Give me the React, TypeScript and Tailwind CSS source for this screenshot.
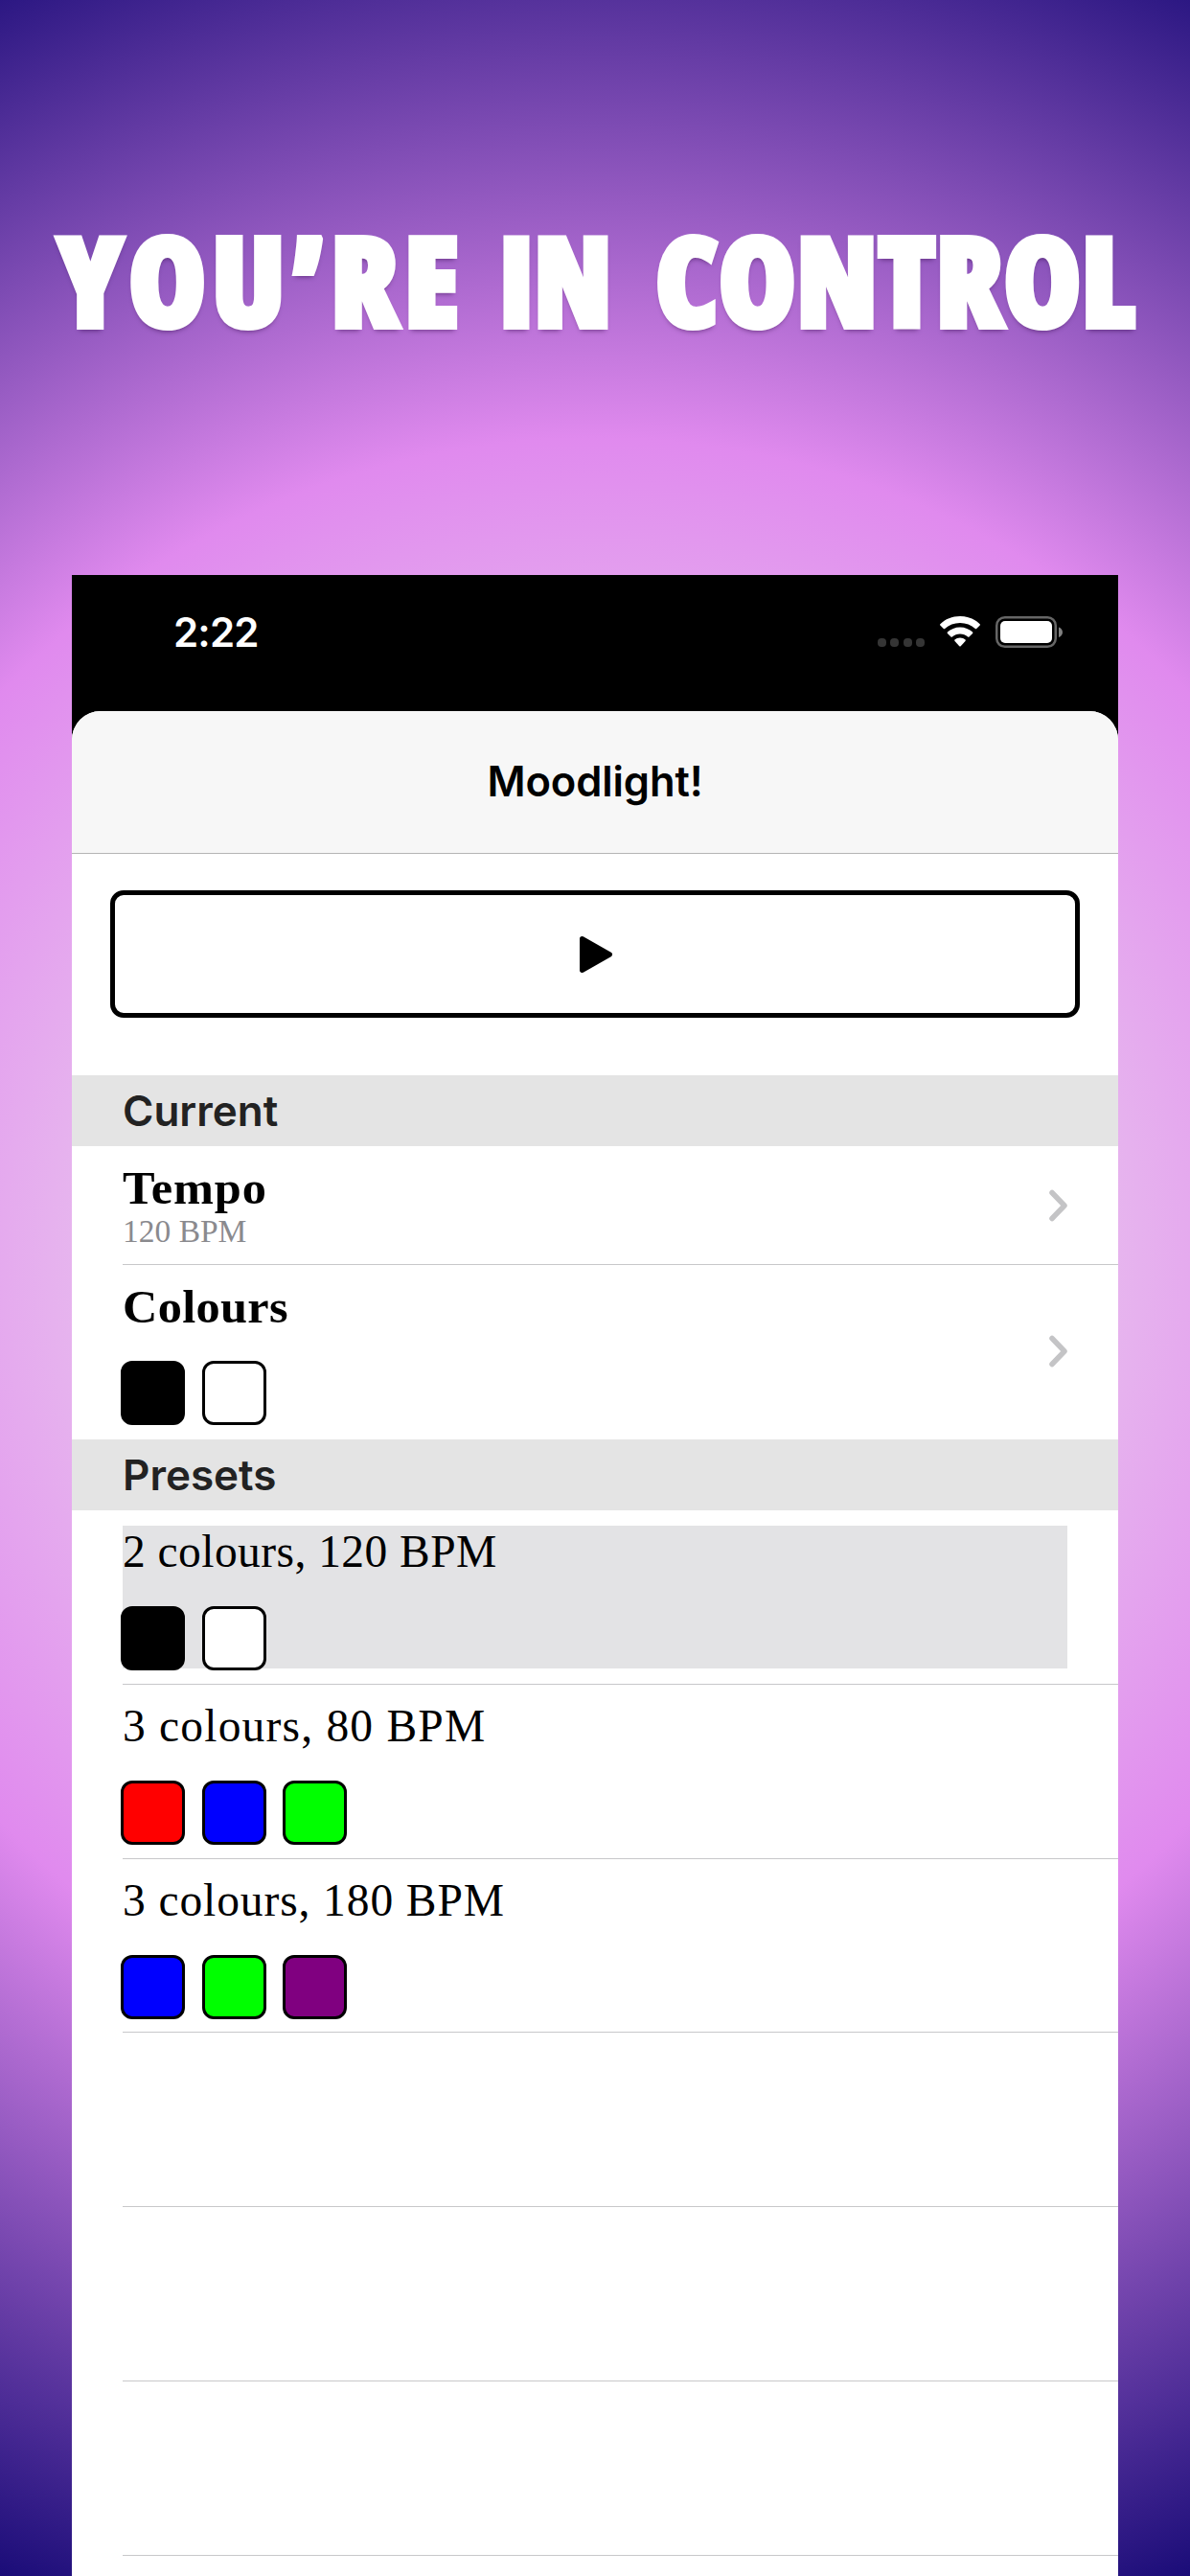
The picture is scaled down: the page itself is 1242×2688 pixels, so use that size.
import React from "react";

const sans = "font-['Inter',sans-serif] font-semibold leading-none whitespace-nowrap";
const serif = "font-['Liberation_Serif',serif] leading-none whitespace-nowrap";

function Swatches({ colors }: { colors: string[] }) {
  return (
    <div className="-ml-[2px] flex gap-[17.5px]">
      {colors.map((c) => (
        <span
          key={c}
          className="size-[67px] shrink-0 rounded-[12px] border-[3px] border-black"
          style={{ backgroundColor: c }}
        />
      ))}
    </div>
  );
}

function Chevron() {
  return (
    <svg width="20" height="34" viewBox="0 0 20 34" fill="none" className="shrink-0">
      <path d="M4 3.5 17 17 4 30.5" stroke="#c4c4c6" strokeWidth="5.500" strokeLinecap="round" strokeLinejoin="round" />
    </svg>
  );
}

function StatusBar() {
  return (
    <div className="flex h-[142px] items-start justify-between pr-[57px] pl-[106px] text-white">
      <span className={`${sans} mt-[39px] text-[42px] tracking-[-0.8px]`}>2:22</span>
      <div className="mt-[43px] flex items-start">
        <div className="mt-[23px] flex gap-[4.4px]">
          {[0, 1, 2, 3].map((i) => (
            <span key={i} className="size-[9px] rounded-[4px] bg-[#353535]" />
          ))}
        </div>
        <svg width="42" height="33" viewBox="0 0 42 33" className="ml-[16px]" fill="#fff">
          <path d="M21 0C12.8 0 5.5 3.100 0.300 8.200Q-.2 8.900.300 9.500L3.800 13Q4.500 13.600 5.200 13C9.300 9.200 14.800 7 21 7S32.700 9.200 36.800 13Q37.500 13.600 38.200 13L41.700 9.500Q42.200 8.900 41.700 8.200C36.500 3.100 29.200 0 21 0Z" />
          <path d="M21 11.500C15.900 11.500 11.300 13.500 7.900 16.600Q7.300 17.300 7.900 18L11.500 21.400Q12.200 22 12.900 21.400C15.100 19.500 17.900 18.400 21 18.400S26.900 19.500 29.100 21.400Q29.800 22 30.500 21.400L34.100 18Q34.700 17.300 34.100 16.600C30.700 13.500 26.100 11.500 21 11.500Z" />
          <path d="M21 22.500C18.800 22.500 16.900 23.300 15.400 24.600Q14.900 25.300 15.500 26L20.300 31.200Q21 31.900 21.700 31.200L26.500 26Q27.100 25.300 26.600 24.600C25.100 23.300 23.200 22.500 21 22.500Z" />
        </svg>
        <svg width="71" height="33" viewBox="0 0 71 33" className="ml-[16px]">
          <rect x="1.250" y="1.250" width="61.500" height="30.500" rx="8.500" fill="none" stroke="#666" strokeWidth="2.500" />
          <rect x="5" y="5" width="54" height="23" rx="5" fill="#fff" />
          <path d="M66 11.500v10.500c2.400-.8 4-2.800 4-5.300s-1.600-4.300-4-5.200Z" fill="#808080" />
        </svg>
      </div>
    </div>
  );
}

function SectionHeader({ children }: { children: React.ReactNode }) {
  return (
    <div className="flex h-[74px] shrink-0 items-center bg-[#e4e4e4] pl-[53px] text-[#222]">
      <span className={`${sans} text-[44px]`}>{children}</span>
    </div>
  );
}

const presets = [
  { label: "2 colours, 120 BPM", tracking: "tracking-[0.45px]", colors: ["#000000", "#ffffff"], selected: true },
  { label: "3 colours, 80 BPM", tracking: "tracking-[1.2px]", colors: ["#ff0000", "#0000ff", "#00ff00"], selected: false },
  { label: "3 colours, 180 BPM", tracking: "tracking-[0.9px]", colors: ["#0000ff", "#00ff00", "#800080"], selected: false },
];

export default function App() {
  return (
    <main className="flex h-[2688px] w-[1242px] flex-col overflow-hidden bg-[radial-gradient(circle_1510px_at_621px_1312px,#f2ffee_0px,#e08aee_855px,#1a0c78_1510px)]">
      <h1 className="flex h-[600px] shrink-0 pt-[209px] pl-[60px] font-['Open_Sans',sans-serif] text-[130px] leading-[164px] font-extrabold whitespace-nowrap text-white [font-stretch:75%] [-webkit-text-stroke:6px_white] [text-shadow:0_4px_5px_rgba(40,0,60,0.5)]">
        <span className="w-[461px] shrink-0 tracking-[6px]">YOU’RE</span>
        <span className="w-[163px] shrink-0 origin-left scale-x-[0.96]">IN</span>
        <span className="shrink-0 tracking-[0.2px]">CONTROL</span>
      </h1>
      <section className="mx-[75px] flex h-[2088px] flex-col overflow-hidden bg-black">
        <StatusBar />
        <div className="flex grow flex-col overflow-hidden rounded-t-[30px] bg-white">
          <header className="flex h-[149px] shrink-0 items-center justify-center border-b border-[#b5b5b5] bg-[#f7f7f7]">
            <span className={`${sans} text-[43.500px] tracking-[-0.1px]`}>Moodlight!</span>
          </header>
          <div className="h-[231px] shrink-0 px-[40px] pt-[38px]">
            <button className="flex h-[133px] w-full items-center justify-center rounded-[14px] border-[5.500px] border-black">
              <svg width="36" height="40" viewBox="0 0 36 40" className="ml-[1px]">
                <path d="M3.500 3.500 32.500 20 3.500 36.500Z" stroke="#000" strokeWidth="5" strokeLinejoin="round" />
              </svg>
            </button>
          </div>
          <SectionHeader>Current</SectionHeader>
          <div className="ml-[53px] flex h-[124px] shrink-0 items-center justify-between border-b border-[#c8c8ca] pr-[53px]">
            <div className="flex flex-col pt-[3px]">
              <span className={`${serif} origin-left scale-x-[1.06] text-[47.500px] font-bold tracking-[0.8px]`}>Tempo</span>
              <span className={`${serif} mt-[3px] text-[33.500px] text-[#8a8a8e]`}>120 BPM</span>
            </div>
            <Chevron />
          </div>
          <div className="ml-[53px] flex h-[182px] shrink-0 items-center justify-between pr-[53px]">
            <div className="flex h-[149px] flex-col justify-between">
              <span className={`${serif} mt-[4px] origin-left scale-x-[1.06] text-[47.500px] font-bold tracking-[0.3px]`}>Colours</span>
              <div className="-mb-[1px]"><Swatches colors={["#000000", "#ffffff"]} /></div>
            </div>
            <div className="pb-[3px]"><Chevron /></div>
          </div>
          <SectionHeader>Presets</SectionHeader>
          {presets.map((p) => (
            <div key={p.label} className="ml-[53px] h-[181.800px] shrink-0 border-b border-[#c8c8ca] pt-[16px] pr-[53px]">
              <div className={p.selected ? "flex h-[149px] flex-col justify-between bg-[#e3e3e5]" : "flex h-[149px] flex-col justify-between"}>
                <span className={`${serif} mt-[4px] text-[47.500px] ${p.tracking}`}>{p.label}</span>
                <div className="-mb-[2px]"><Swatches colors={p.colors} /></div>
              </div>
            </div>
          ))}
          {[0, 1, 2].map((i) => (
            <div key={i} className="ml-[53px] h-[181.800px] shrink-0 border-b border-[#c8c8ca]" />
          ))}
        </div>
      </section>
    </main>
  );
}
